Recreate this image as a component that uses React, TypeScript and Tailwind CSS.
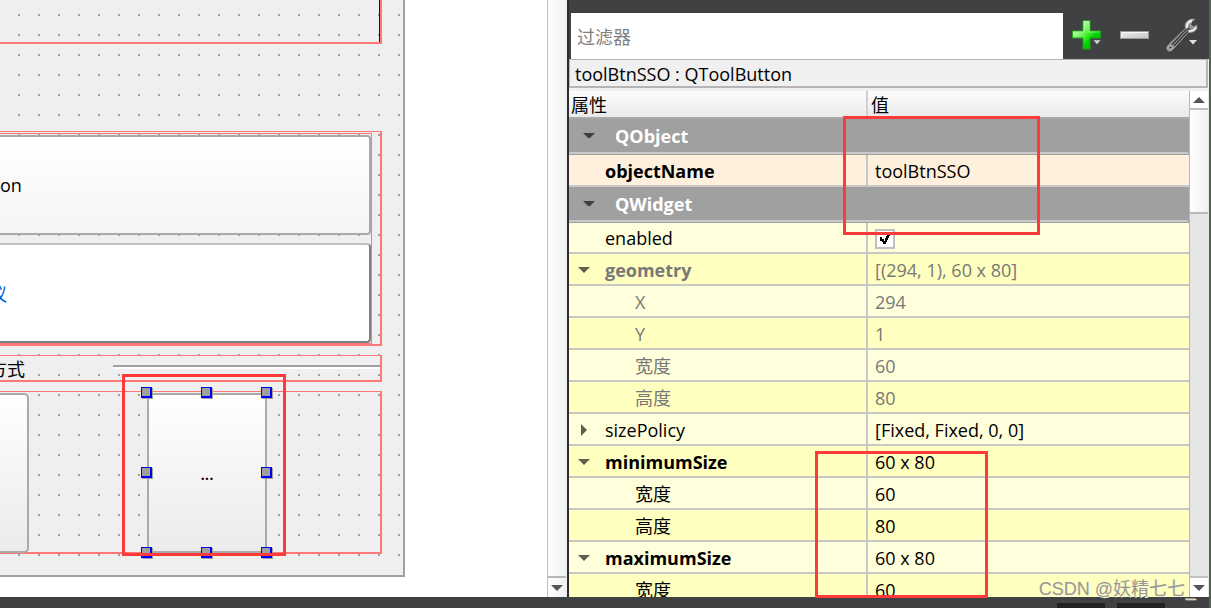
import React from "react";

type Tone = "dark" | "muted";

interface Property {
  kind: "group" | "row";
  name: string;
  value?: string;
  indent?: boolean;
  bold?: boolean;
  tone?: Tone;
  arrow?: "down" | "right";
  background: string;
  height: string;
  checkbox?: boolean;
}

const LIGHT = "bg-[#ffffdc]";
const DEEP = "bg-[#ffffbf]";

const properties: Property[] = [
  { kind: "group", name: "QObject", background: "bg-[#a0a0a0]", height: "h-9" },
  { kind: "row", name: "objectName", value: "toolBtnSSO", bold: true, background: "bg-[#fff0de]", height: "h-8" },
  { kind: "group", name: "QWidget", background: "bg-[#a0a0a0]", height: "h-9" },
  { kind: "row", name: "enabled", checkbox: true, background: LIGHT, height: "h-[31px]" },
  { kind: "row", name: "geometry", value: "[(294, 1), 60 x 80]", bold: true, tone: "muted", arrow: "down", background: DEEP, height: "h-8" },
  { kind: "row", name: "X", value: "294", indent: true, tone: "muted", background: LIGHT, height: "h-8" },
  { kind: "row", name: "Y", value: "1", indent: true, tone: "muted", background: DEEP, height: "h-8" },
  { kind: "row", name: "宽度", value: "60", indent: true, tone: "muted", background: LIGHT, height: "h-8" },
  { kind: "row", name: "高度", value: "80", indent: true, tone: "muted", background: DEEP, height: "h-8" },
  { kind: "row", name: "sizePolicy", value: "[Fixed, Fixed, 0, 0]", arrow: "right", background: LIGHT, height: "h-8" },
  { kind: "row", name: "minimumSize", value: "60 x 80", bold: true, arrow: "down", background: DEEP, height: "h-8" },
  { kind: "row", name: "宽度", value: "60", indent: true, background: LIGHT, height: "h-8" },
  { kind: "row", name: "高度", value: "80", indent: true, background: DEEP, height: "h-8" },
  { kind: "row", name: "maximumSize", value: "60 x 80", bold: true, arrow: "down", background: LIGHT, height: "h-8" },
  { kind: "row", name: "宽度", value: "60", indent: true, background: DEEP, height: "h-8" },
];

function Triangle({ direction, className }: { direction: "up" | "down" | "right"; className: string }) {
  const paths = {
    up: "M0 6 6 0 12 6Z",
    down: "M0 0H12L6 6Z",
    right: "M0 0 6 6 0 12Z",
  };
  return (
    <svg
      aria-hidden="true"
      className={className}
      width={direction === "right" ? 6 : 12}
      height={direction === "right" ? 12 : 6}
      fill="currentColor"
    >
      <path d={paths[direction]} />
    </svg>
  );
}

function PropertyRow({ item }: { item: Property }) {
  if (item.kind === "group") {
    return (
      <tr className={`${item.height} ${item.background}`}>
        <th colSpan={2} scope="colgroup" className="border-b border-[#a0a0a0] p-0 text-left font-bold text-white">
          <div className="mr-px flex h-[35px] items-center border-b-2 border-[#c8c8c8]">
            <button type="button" aria-label={`${item.name} 折叠`} className="ml-3.5 flex w-8 text-[#404040]">
              <Triangle direction="down" className="h-[5px]" />
            </button>
            {item.name}
          </div>
        </th>
      </tr>
    );
  }
  const color = item.tone === "muted" ? "text-[#787878]" : "text-black";
  return (
    <tr className={`${item.height} ${item.background} ${color}`}>
      <th
        scope="row"
        className={`border-r-2 border-b-2 border-[#c8c8c8] px-0 pt-px pb-0 text-left ${item.bold ? "font-bold" : "font-normal"}`}
      >
        <div className="flex items-center">
          <span className="flex w-9 pl-[9px]">
            {item.arrow && (
              <button type="button" aria-label={`${item.name} 展开`} className={item.arrow === "right" ? "pl-[3px] text-[#5e5e4e]" : "text-[#5e5e4e]"}>
                <Triangle direction={item.arrow} className="block" />
              </button>
            )}
          </span>
          <span className={item.indent ? "pl-[30px]" : ""}>
            {item.checkbox ? <label htmlFor="enabled">{item.name}</label> : item.name}
          </span>
        </div>
      </th>
      <td className="border-b-2 border-[#c8c8c8] px-0 pt-px pb-0 pl-[7px]">
        {item.checkbox ? (
          <span className="relative mt-0.5 flex">
            <input
              id="enabled"
              type="checkbox"
              defaultChecked
              className="peer size-5 appearance-none border-2 border-[#c0c0c0] bg-white"
            />
            <svg
              aria-hidden="true"
              className="pointer-events-none absolute top-1 left-1 hidden peer-checked:block"
              width="12"
              height="12"
            >
              <path d="M1 4H3V6H5V8H6V5H7V3H8V1H11V3H10V5H9V7H8V9H7V11H4V9H3V8H1Z" fill="#000" />
            </svg>
          </span>
        ) : (
          item.value
        )}
      </td>
    </tr>
  );
}

function Handle() {
  return (
    <span className="block size-[11px] border-t border-r-2 border-b-2 border-l border-[#0000ff] bg-[#a0a0a0] shadow-[1px_1px_0_#a0a0a0]" />
  );
}

function SelectionHandles() {
  return (
    <div className="absolute -inset-1.5 flex flex-col justify-between">
      <div className="flex justify-between pr-px"><Handle /><Handle /><Handle /></div>
      <div className="flex justify-between pr-px"><Handle /><Handle /></div>
      <div className="flex justify-between pr-px pb-px"><Handle /><Handle /><Handle /></div>
    </div>
  );
}

function FormCanvas() {
  return (
    <div className="w-[405px] border-r-2 border-b-2 border-[#a0a0a0] bg-[#efefef]">
      <div className="flex flex-col bg-[linear-gradient(90deg,#efefef_18px,transparent_18px),linear-gradient(#efefef_14px,#a0a0a0_14px,#a0a0a0_16px,#efefef_16px)] bg-[size:20px_20px] pr-[21px] pb-2">
        <div className="h-11 border-r-2 border-b-2 border-[#ff7878]">
          <div className="h-full border-r border-[#0000c8]" />
        </div>

        <div className="mt-[87px] border-t border-r-2 border-b-2 border-[#ff7878] pt-px pr-2">
          <div className="flex flex-col gap-2 border-t border-r border-b border-[#ff7878] pt-px">
            <button
              type="button"
              className="h-[100px] rounded-r-[4px] border-y-2 border-r-2 border-[#aaaaaa] bg-linear-to-b from-white to-[#f5f5f5] text-left"
            >
              on
            </button>
            <div className="flex h-[100px] items-center overflow-hidden rounded-r-[4px] border-t-2 border-r-2 border-b-2 border-t-[#bfbfbf] border-r-[#808080] border-b-[#808080] bg-white">
              <a href="#agreement" className="-ml-[11px] pt-0.5 text-[#0055e0]">议</a>
            </div>
          </div>
        </div>

        <div className="mt-[9px] flex h-[27px] items-center overflow-hidden border-t border-r-2 border-b-2 border-[#ff7878]">
          <span className="-ml-[11px] w-[124px] pt-0.5 text-black">方式</span>
          <div className="-mt-0.5 h-1 flex-1 border-t-2 border-b-2 border-t-[#a0a0a0] border-b-white" />
        </div>

        <div className="mt-[9px] flex h-[163px] items-start border-t border-r-2 border-b-2 border-[#ff7878] pt-px">
          <button
            type="button"
            aria-label="工具按钮"
            className="h-40 w-[29px] shrink-0 rounded-r-[5px] border-y-2 border-r-2 border-[#aaaaaa] bg-linear-to-b from-white to-[#ebebeb]"
          />
          <div className="relative ml-[118px] h-40 w-[120px] shrink-0">
            <button
              type="button"
              className="size-full border-2 border-[#aaaaaa] bg-linear-to-b from-white to-[#ebebeb] pt-0.5 text-base font-semibold"
            >
              ...
            </button>
            <SelectionHandles />
            <div className="pointer-events-none absolute -top-[19px] -right-[19px] -bottom-[3px] -left-[25px] border-3 border-[#ff3a3a]" />
          </div>
        </div>
      </div>
      <div className="h-[13px]" />
    </div>
  );
}

function Toolbar() {
  return (
    <div className="flex h-[59px] items-end bg-[#404142] pl-0.5">
      <input
        type="text"
        aria-label="过滤器"
        placeholder="过滤器"
        className="h-[46px] min-w-0 flex-1 bg-white px-1.5 pt-0.5 outline-none placeholder:text-[#808080]"
      />
      <div className="flex h-12 w-[146px] items-center text-[#dedede]">
        <button type="button" aria-label="添加" className="ml-2">
          <svg width="32" height="32" viewBox="0 0 32 32">
            <defs>
              <linearGradient id="plus" x1="0" y1="0" x2="1" y2="1">
                <stop offset="0.2" stopColor="#c8ffc0" />
                <stop offset="0.5" stopColor="#48f030" />
                <stop offset="0.65" stopColor="#00d400" />
                <stop offset="1" stopColor="#00a800" />
              </linearGradient>
            </defs>
            <path d="M12 1.5H19V12H29.500V19H19V30H12V19H1.500V12H12Z" fill="url(#plus)" stroke="#1da51d" />
            <path d="M13 11V2.500H18V13H28.500M2.500 18V13H13V11" fill="none" stroke="#a8f8a0" strokeOpacity="0.7" />
            <path d="M22 21H30L26 25.500Z" fill="#d8d8d8" stroke="#404142" strokeWidth="0.5" />
          </svg>
        </button>
        <button type="button" aria-label="删除" className="ml-4">
          <svg width="32" height="32" viewBox="0 0 32 32">
            <defs>
              <linearGradient id="minus" x1="0" y1="0" x2="1" y2="1">
                <stop offset="0" stopColor="#eeeeee" />
                <stop offset="0.5" stopColor="#dadada" />
                <stop offset="1" stopColor="#c0c0c0" />
              </linearGradient>
            </defs>
            <rect x="1.500" y="12.500" width="28" height="7" fill="url(#minus)" stroke="#9a9a9a" />
            <path d="M2.500 18.500V13.500H28.500" fill="none" stroke="#f6f6f6" />
          </svg>
        </button>
        <button type="button" aria-label="配置" className="ml-[15px]">
          <svg width="32" height="34" viewBox="0 0 32 34">
            <path
              d="M28.500 1.500C25 .5 21 2.500 19.500 6C19 8 19.500 9.500 19.500 10.500L2.500 27C.5 29 .5 31.500 2 32.500C3.500 33.500 5.500 33 7 31L22.500 14C26 15 30 13 31 9.500L30.500 7.500L27.500 9L24.500 7L25.500 3.500Z"
              fill="#909090"
              stroke="#b4b4b4"
            />
            <path d="M20.500 11 6 26.500M22 13 8 28" stroke="#383838" strokeWidth="1.400" />
            <path d="M26 2.500C22.500 3.500 20.500 6 21 10M22.500 13C26 13.500 28.500 12 30 9.500" fill="none" stroke="#eeeeee" strokeWidth="2" />
            <circle cx="4.500" cy="29.500" r="1.600" fill="#303030" stroke="#d0d0d0" />
            <circle cx="22.500" cy="11" r="1.400" fill="#505050" />
            <path d="M23 22H31L27 26.500Z" fill="#e0e0e0" />
          </svg>
        </button>
      </div>
    </div>
  );
}

function PropertyEditor() {
  return (
    <section className="relative flex w-[640px] shrink-0 flex-col bg-[#f0f0f0]">
      <Toolbar />
      <div className="mr-px flex h-[29px] items-center border-t border-r-2 border-b-2 border-l border-[#b5b5b5] px-[5px] pt-0.5">
        toolBtnSSO : QToolButton
      </div>
      <div className="mt-[3px] flex min-h-0 flex-1">
        <div className="min-w-0 flex-1 overflow-hidden">
          <table className="w-full table-fixed border-separate border-spacing-0">
            <colgroup>
              <col className="w-[299px]" />
              <col />
            </colgroup>
            <thead>
              <tr className="h-7 bg-linear-to-b from-[#fcfcfc] to-[#e9e9e9]">
                <th scope="col" className="border-b-2 border-[#a9a9a9] p-0 pl-0.5 text-left font-normal">
                  <div className="h-[26px] border-r-2 border-[#d0d0d0] leading-7">属性</div>
                </th>
                <th scope="col" className="border-b-2 border-[#a9a9a9] p-0 pl-[3px] text-left font-normal">
                  <div className="h-[26px] leading-7">值</div>
                </th>
              </tr>
            </thead>
            <tbody>
              {properties.map((item, index) => (
                <PropertyRow key={index} item={item} />
              ))}
            </tbody>
          </table>
        </div>
        <div className="flex w-5 flex-col border-l border-[#b8b8b8] bg-[#e6e6e6] pr-px text-[#555555]">
          <button type="button" aria-label="向上滚动" className="flex h-[19px] items-center justify-center border-b-2 border-[#c0c0c0] bg-white">
            <Triangle direction="up" className="" />
          </button>
          <div className="h-[104px] border-b-2 border-[#b8b8b8] bg-linear-to-r from-white to-[#f0f0f0]" />
          <div className="flex-1" />
          <button type="button" aria-label="向下滚动" className="flex h-[21px] items-center justify-center border-t-2 border-[#c0c0c0] bg-white">
            <Triangle direction="down" className="" />
          </button>
        </div>
      </div>
      <div className="pointer-events-none absolute top-[116px] left-[274px] h-[119px] w-[197px] border-3 border-[#ff3a3a]" />
      <div className="pointer-events-none absolute top-[451px] left-[246px] h-[147px] w-[173px] border-3 border-[#ff3a3a]" />
    </section>
  );
}

export default function App() {
  return (
    <div className="relative flex h-screen overflow-hidden bg-[#404142] font-['Open_Sans','Noto_Sans_CJK_SC',sans-serif] text-lg leading-6 text-black">
      <div className="flex min-w-0 flex-1 flex-col">
        <main className="flex min-h-0 flex-1">
          <div className="min-w-0 flex-1 overflow-hidden bg-white">
            <FormCanvas />
          </div>
          <div className="flex w-5 flex-col justify-end border-l border-[#c0c0c0] bg-linear-to-r from-white to-[#f0f0f0] pr-px text-[#555555]">
            <button type="button" aria-label="画布向下滚动" className="flex h-[21px] items-center justify-center border-t-2 border-[#b8b8b8]">
              <Triangle direction="down" className="" />
            </button>
          </div>
          <div className="w-0.5 bg-[#2c2c2c]" />
          <PropertyEditor />
        </main>
        <footer className="flex h-[11px] items-end justify-end gap-3 pr-11">
          <span className="h-[5px] w-12 bg-[#222222]" />
          <span className="h-[5px] w-12 bg-[#222222]" />
        </footer>
      </div>
      <div className="w-0.5 bg-[#556055]" />
      <div className="pointer-events-none absolute right-4 bottom-[7px] font-['Liberation_Sans','Noto_Sans_CJK_SC',sans-serif] text-[#98988a] [text-shadow:1px_1px_0_#f4f4e0]">
        CSDN @妖精七七_
      </div>
    </div>
  );
}
